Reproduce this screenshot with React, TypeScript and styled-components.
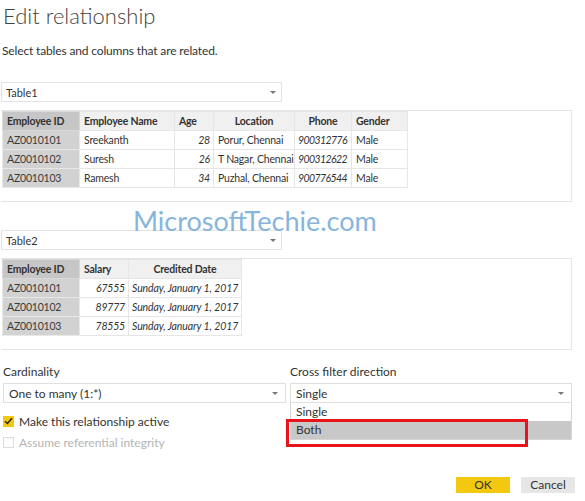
import React from 'react';
import styled, { createGlobalStyle } from 'styled-components';

const GlobalStyle = createGlobalStyle`
  html, body {
    margin: 0;
    padding: 0;
    background: #fff;
  }
  body {
    font-family: Lato, "Liberation Sans", sans-serif;
    color: #333;
  }
`;

const Dialog = styled.div`
  position: relative;
  width: 585px;
  height: 501px;
  overflow: hidden;
  padding: 0 1px;
  box-sizing: border-box;
`;

const Title = styled.h1`
  margin: 2px 0 0 2px;
  font-size: 22px;
  line-height: 28px;
  font-weight: 300;
  color: #444;
`;

const Subtitle = styled.p`
  margin: 13px 0 0 1px;
  font-size: 12px;
  line-height: 16px;
  letter-spacing: -0.15px;
  color: #333;
`;

const Select = styled.div<{ $width: number; $top: number }>`
  display: flex;
  align-items: center;
  justify-content: space-between;
  box-sizing: border-box;
  width: ${p => p.$width}px;
  height: 20px;
  margin-top: ${p => p.$top}px;
  padding: 0 5px 0 4px;
  border: 1px solid #e2e2e2;
  background: #fff;
  font-size: 11px;
  color: #333;
`;

const Arrow = styled.span`
  width: 0;
  height: 0;
  border-left: 3px solid transparent;
  border-right: 3px solid transparent;
  border-top: 3px solid #777;
`;

const GridFrame = styled.div`
  box-sizing: border-box;
  width: 571px;
  height: 92px;
  margin-top: 8px;
  border: 1px solid #e4e4e4;
  border-left: none;
`;

const Grid = styled.table<{ $width: number }>`
  border-collapse: collapse;
  table-layout: fixed;
  width: ${p => p.$width}px;
  margin-left: 1px;
  font-size: 10.5px;
  letter-spacing: -0.2px;
  color: #333;
`;

const HeadCell = styled.th<{ $w: number; $selected?: boolean; $align?: string }>`
  width: ${p => p.$w}px;
  height: 19px;
  box-sizing: border-box;
  padding: 0 4px;
  background: ${p => (p.$selected ? '#c6c6c6' : '#f0f0f0')};
  border: 1px solid ${p => (p.$selected ? '#d8d8d8' : '#e6e6e6')};
  font-weight: 700;
  text-align: ${p => p.$align || 'left'};
  white-space: nowrap;
  overflow: hidden;
`;

const Cell = styled.td<{ $selected?: boolean; $italic?: boolean; $align?: string; $spacing?: number }>`
  height: 19px;
  box-sizing: border-box;
  padding: 0 ${p => (p.$italic ? 3 : 4)}px;
  background: ${p => (p.$selected ? '#d2d2d2' : '#fff')};
  border: 1px solid ${p => (p.$selected ? '#e8e8e8' : '#e6e6e6')};
  font-style: ${p => (p.$italic ? 'italic' : 'normal')};
  letter-spacing: ${p => p.$spacing ?? -0.2}px;
  text-align: ${p => p.$align || 'left'};
  white-space: nowrap;
  overflow: hidden;
  color: ${p => (p.$selected ? '#3a3a3a' : '#333')};
`;

const Watermark = styled.div`
  position: absolute;
  left: 133px;
  top: 206px;
  font-size: 27px;
  line-height: 30px;
  color: #7aaedb;
  opacity: 0.9;
  pointer-events: none;
`;

const Options = styled.div`
  display: grid;
  grid-template-columns: 283px 282px;
  column-gap: 4px;
  margin: 14px 0 0 2px;
`;

const Field = styled.div`
  position: relative;
  display: flex;
  flex-direction: column;
`;

const Label = styled.div`
  font-size: 12px;
  line-height: 16px;
  color: #333;
  margin-bottom: 3px;
`;

const FieldSelect = styled(Select)`
  width: 100%;
  margin-top: 0;
  padding: 0 7px 0 5px;
  font-size: 12px;
  border-color: #e0e0e0;
`;

const Check = styled.label<{ $disabled?: boolean }>`
  display: flex;
  align-items: center;
  gap: 5px;
  height: 16px;
  font-size: 12px;
  color: ${p => (p.$disabled ? '#b4b4b4' : '#333')};
  margin-top: ${p => (p.$disabled ? 5 : 10)}px;
`;

const Box = styled.span<{ $checked?: boolean }>`
  display: flex;
  align-items: center;
  justify-content: center;
  box-sizing: border-box;
  width: 11px;
  height: 11px;
  background: ${p => (p.$checked ? '#f2c811' : '#fff')};
  border: 1px solid ${p => (p.$checked ? '#f2c811' : '#dcdcdc')};
`;

const MenuList = styled.div`
  position: absolute;
  left: 0;
  right: 0;
  top: 39px;
  border: 1px solid #d6d6d6;
  border-top: none;
  background: #fff;
`;

const MenuItem = styled.div<{ $active?: boolean }>`
  height: 18px;
  line-height: 18px;
  padding-left: 5px;
  font-size: 12px;
  color: #333;
  background: ${p => (p.$active ? '#c8c8c8' : '#fff')};
`;

const Highlight = styled.div`
  position: absolute;
  left: -4px;
  top: 55px;
  width: 242px;
  height: 28px;
  box-sizing: border-box;
  border: 3px solid #e8141c;
  pointer-events: none;
`;

const Footer = styled.div`
  display: flex;
  justify-content: flex-end;
  gap: 11px;
  margin: 27px 9px 0 0;
`;

const Button = styled.button<{ $primary?: boolean }>`
  width: 54px;
  height: 16px;
  padding: 0;
  border: none;
  font-family: inherit;
  font-size: 12px;
  line-height: 16px;
  color: #333;
  background: ${p => (p.$primary ? '#f2c811' : '#e6e6e6')};
`;

type Col = {
  name: string;
  w: number;
  align?: string;
  headAlign?: string;
  italic?: boolean;
  spacing?: number;
};

const table1Cols: Col[] = [
  { name: 'Employee ID', w: 77 },
  { name: 'Employee Name', w: 95 },
  { name: 'Age', w: 39, align: 'right', italic: true },
  { name: 'Location', w: 81, headAlign: 'center' },
  { name: 'Phone', w: 57, italic: true, headAlign: 'center', spacing: -0.6 },
  { name: 'Gender', w: 56 },
];

const table1Rows = [
  ['AZ0010101', 'Sreekanth', '28', 'Porur, Chennai', '900312776', 'Male'],
  ['AZ0010102', 'Suresh', '26', 'T Nagar, Chennai', '900312622', 'Male'],
  ['AZ0010103', 'Ramesh', '34', 'Puzhal, Chennai', '900776544', 'Male'],
];

const table2Cols: Col[] = [
  { name: 'Employee ID', w: 77 },
  { name: 'Salary', w: 49, align: 'right', italic: true },
  { name: 'Credited Date', w: 113, align: 'right', italic: true, headAlign: 'center', spacing: -0.1 },
];

const table2Rows = [
  ['AZ0010101', '67555', 'Sunday, January 1, 2017'],
  ['AZ0010102', '89777', 'Sunday, January 1, 2017'],
  ['AZ0010103', '78555', 'Sunday, January 1, 2017'],
];

const DataGrid: React.FC<{ cols: Col[]; rows: string[][] }> = ({ cols, rows }) => (
  <GridFrame>
    <Grid $width={cols.reduce((sum, c) => sum + c.w, 0)}>
      <thead>
        <tr>
          {cols.map((c, i) => (
            <HeadCell key={c.name} $w={c.w} $selected={i === 0} $align={c.headAlign}>
              {c.name}
            </HeadCell>
          ))}
        </tr>
      </thead>
      <tbody>
        {rows.map(row => (
          <tr key={row[0]}>
            {row.map((v, i) => (
              <Cell
                key={i}
                $selected={i === 0}
                $italic={cols[i].italic}
                $align={cols[i].align}
                $spacing={cols[i].spacing}
              >
                {v}
              </Cell>
            ))}
          </tr>
        ))}
      </tbody>
    </Grid>
  </GridFrame>
);

const CheckMark = () => (
  <svg width="9" height="8" viewBox="0 0 9 8">
    <path d="M1 4.2 L3.4 6.5 L8 1.2" fill="none" stroke="#222" strokeWidth="1.5" />
  </svg>
);

export default function App() {
  return (
    <>
      <GlobalStyle />
      <Dialog>
        <Title>Edit relationship</Title>
        <Subtitle>Select tables and columns that are related.</Subtitle>

        <Select $width={281} $top={23}>
          Table1
          <Arrow />
        </Select>
        <DataGrid cols={table1Cols} rows={table1Rows} />

        <Select $width={281} $top={28}>
          Table2
          <Arrow />
        </Select>
        <DataGrid cols={table2Cols} rows={table2Rows} />

        <Watermark>MicrosoftTechie.com</Watermark>

        <Options>
          <Field>
            <Label>Cardinality</Label>
            <FieldSelect $width={283} $top={0}>
              One to many (1:*)
              <Arrow />
            </FieldSelect>
            <Check>
              <Box $checked>
                <CheckMark />
              </Box>
              Make this relationship active
            </Check>
            <Check $disabled>
              <Box />
              Assume referential integrity
            </Check>
          </Field>
          <Field>
            <Label>Cross filter direction</Label>
            <FieldSelect $width={282} $top={0}>
              Single
              <Arrow />
            </FieldSelect>
            <MenuList>
              <MenuItem>Single</MenuItem>
              <MenuItem $active>Both</MenuItem>
            </MenuList>
            <Highlight />
          </Field>
        </Options>

        <Footer>
          <Button $primary>OK</Button>
          <Button>Cancel</Button>
        </Footer>
      </Dialog>
    </>
  );
}
